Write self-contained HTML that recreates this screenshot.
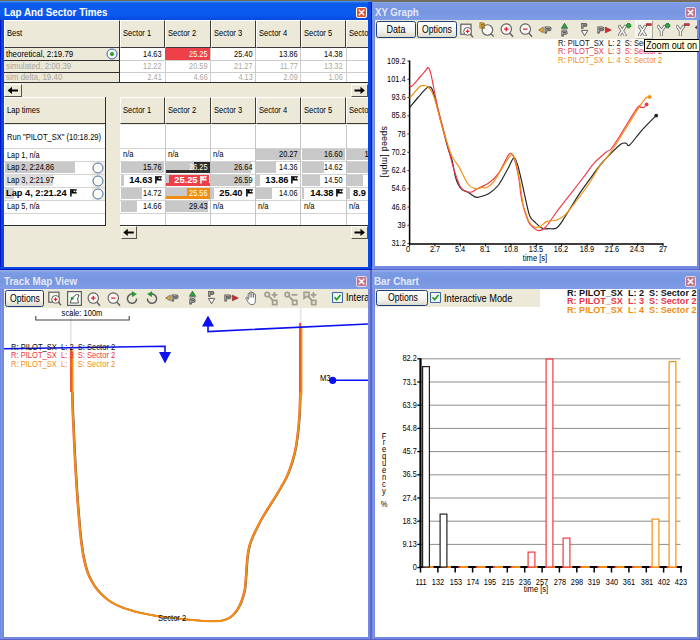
<!DOCTYPE html>
<html><head><meta charset="utf-8"><title>Lap And Sector Times</title>
<style>
html,body{margin:0;padding:0;}
body{width:700px;height:640px;position:relative;overflow:hidden;background:#fff;font-family:"Liberation Sans",sans-serif;}
div,span.t,svg{position:absolute;}
span.t{white-space:pre;}
.hc{background:#ece9d8;box-sizing:border-box;border-left:1px solid #fff;border-top:1px solid #fff;border-right:1px solid #3c3c3c;border-bottom:1px solid #3c3c3c;}
.btn{box-sizing:border-box;border:1px solid #1d3f7a;border-radius:2.5px;background:linear-gradient(#ffffff,#f4f3ee 60%,#dddacb);}
.sb{box-sizing:border-box;background:#ece9d8;border-left:1px solid #fff;border-top:1px solid #fff;border-right:1px solid #55524a;border-bottom:1px solid #55524a;}
</style></head><body>

<div style="left:0px;top:0px;width:700px;height:2px;background:#726c5d;"></div>
<div style="left:0px;top:1.2px;width:372px;height:269px;background:#0a46e4;"></div>
<div style="left:0px;top:1.2px;width:1.2px;height:269px;background:#0018c4;"></div>
<div style="left:370.6px;top:1.2px;width:1.4px;height:269px;background:#0016b8;"></div>
<div style="left:0px;top:1.2px;width:372px;height:19px;background:linear-gradient(#3a8ef8 0,#0a58e6 14%,#0a5cee 40%,#0a5af0 72%,#0848da 100%);"></div>
<div style="left:4px;top:20px;width:364px;height:246.6px;background:#ece9d8;"></div>
<div style="left:372px;top:1.2px;width:328px;height:268.8px;background:#7189de;"></div>
<div style="left:372px;top:269.0px;width:328px;height:1px;background:#5c62c8;"></div>
<div style="left:699px;top:1.2px;width:1px;height:268.8px;background:#5c62c8;"></div>
<div style="left:373.2px;top:20.2px;width:1.3px;height:248.8px;background:#7f97e4;"></div>
<div style="left:372px;top:1.2px;width:328px;height:19px;background:linear-gradient(#98b0ec 0,#7b9ae4 15%,#7896e0 60%,#809ce6 100%);"></div>
<div style="left:372px;top:0px;width:328px;height:2px;background:#726c5d;"></div>
<div style="left:0px;top:270px;width:372px;height:370px;background:#7189de;"></div>
<div style="left:0px;top:639px;width:372px;height:1px;background:#5c62c8;"></div>
<div style="left:371px;top:270px;width:1px;height:370px;background:#5c62c8;"></div>
<div style="left:1.2px;top:289px;width:1.3px;height:350px;background:#7f97e4;"></div>
<div style="left:0px;top:270px;width:372px;height:19px;background:linear-gradient(#98b0ec 0,#7b9ae4 15%,#7896e0 60%,#809ce6 100%);"></div>
<div style="left:372px;top:270px;width:328px;height:370px;background:#7189de;"></div>
<div style="left:372px;top:639px;width:328px;height:1px;background:#5c62c8;"></div>
<div style="left:699px;top:270px;width:1px;height:370px;background:#5c62c8;"></div>
<div style="left:373.2px;top:289px;width:1.3px;height:350px;background:#7f97e4;"></div>
<div style="left:372px;top:270px;width:328px;height:19px;background:linear-gradient(#98b0ec 0,#7b9ae4 15%,#7896e0 60%,#809ce6 100%);"></div>
<div style="left:370.4px;top:270px;width:1.4px;height:370px;background:#5e66cc;"></div>
<div style="left:368px;top:1.2px;width:3.8px;height:269px;background:#0a46e4;"></div>
<div style="left:370.6px;top:1.2px;width:1.3px;height:269px;background:#0016b8;"></div>
<div style="left:0px;top:266.6px;width:372px;height:3.4px;background:#0a46e4;"></div>
<div style="left:0px;top:268.8px;width:372px;height:1.2px;background:#0016b8;"></div>
<div style="left:0px;top:1.2px;width:372px;height:1px;background:#3d8df7;"></div>
<div style="left:375px;top:20px;width:322px;height:246.3px;background:#fff;"></div>
<div style="left:4px;top:288.6px;width:364px;height:348.4px;background:#fff;"></div>
<div style="left:375px;top:288.6px;width:322px;height:348.4px;background:#fff;"></div>
<span class="t" style="top:7.98px;font-size:10.3px;line-height:10.3px;color:#fff;font-weight:bold;left:3.9px;transform-origin:0 50%;transform:scaleX(0.957);">Lap And Sector Times</span>
<span class="t" style="top:7.98px;font-size:10.3px;line-height:10.3px;color:#e4e9f9;font-weight:bold;left:374.5px;transform-origin:0 50%;transform:scaleX(0.935);">XY Graph</span>
<span class="t" style="top:276.88px;font-size:10.3px;line-height:10.3px;color:#e4e9f9;font-weight:bold;left:4px;transform-origin:0 50%;transform:scaleX(0.957);">Track Map View</span>
<span class="t" style="top:276.88px;font-size:10.3px;line-height:10.3px;color:#e4e9f9;font-weight:bold;left:374.4px;transform-origin:0 50%;transform:scaleX(0.957);">Bar Chart</span>
<svg style="left:356px;top:7px" width="11" height="11" viewBox="0 0 11 11"><rect x="0.5" y="0.5" width="10" height="10" rx="1.5" fill="#e2502f" stroke="#fff" stroke-width="1"/><path d="M3.2 3.2L7.8 7.8M7.8 3.2L3.2 7.8" stroke="#fff" stroke-width="1.6" stroke-linecap="round"/></svg>
<svg style="left:684.5px;top:6.5px" width="11" height="11" viewBox="0 0 11 11"><rect x="0.5" y="0.5" width="10" height="10" rx="1.5" fill="#c0748c" stroke="#e6d7e6" stroke-width="1"/><path d="M3.2 3.2L7.8 7.8M7.8 3.2L3.2 7.8" stroke="#fff" stroke-width="1.6" stroke-linecap="round"/></svg>
<svg style="left:356px;top:275.5px" width="11" height="11" viewBox="0 0 11 11"><rect x="0.5" y="0.5" width="10" height="10" rx="1.5" fill="#c0748c" stroke="#e6d7e6" stroke-width="1"/><path d="M3.2 3.2L7.8 7.8M7.8 3.2L3.2 7.8" stroke="#fff" stroke-width="1.6" stroke-linecap="round"/></svg>
<svg style="left:684.5px;top:275.5px" width="11" height="11" viewBox="0 0 11 11"><rect x="0.5" y="0.5" width="10" height="10" rx="1.5" fill="#c0748c" stroke="#e6d7e6" stroke-width="1"/><path d="M3.2 3.2L7.8 7.8M7.8 3.2L3.2 7.8" stroke="#fff" stroke-width="1.6" stroke-linecap="round"/></svg>
<div style="left:4px;top:20px;width:364px;height:246px;overflow:hidden">
<div style="left:-4px;top:-20px;width:700px;height:640px">
<div class="hc" style="left:4px;top:20px;width:116px;height:27.8px"></div>
<span class="t" style="top:28.72px;font-size:8.6px;line-height:8.6px;color:#000;left:7px;transform-origin:0 50%;transform:scaleX(0.88);">Best</span>
<div class="hc" style="left:120.0px;top:20px;width:45.25px;height:27.8px"></div>
<span class="t" style="top:28.72px;font-size:8.6px;line-height:8.6px;color:#000;left:123.0px;transform-origin:0 50%;transform:scaleX(0.88);">Sector 1</span>
<div class="hc" style="left:165.25px;top:20px;width:45.25px;height:27.8px"></div>
<span class="t" style="top:28.72px;font-size:8.6px;line-height:8.6px;color:#000;left:168.25px;transform-origin:0 50%;transform:scaleX(0.88);">Sector 2</span>
<div class="hc" style="left:210.5px;top:20px;width:45.25px;height:27.8px"></div>
<span class="t" style="top:28.72px;font-size:8.6px;line-height:8.6px;color:#000;left:213.5px;transform-origin:0 50%;transform:scaleX(0.88);">Sector 3</span>
<div class="hc" style="left:255.75px;top:20px;width:45.25px;height:27.8px"></div>
<span class="t" style="top:28.72px;font-size:8.6px;line-height:8.6px;color:#000;left:258.75px;transform-origin:0 50%;transform:scaleX(0.88);">Sector 4</span>
<div class="hc" style="left:301.0px;top:20px;width:45.25px;height:27.8px"></div>
<span class="t" style="top:28.72px;font-size:8.6px;line-height:8.6px;color:#000;left:304.0px;transform-origin:0 50%;transform:scaleX(0.88);">Sector 5</span>
<div class="hc" style="left:346.25px;top:20px;width:45.25px;height:27.8px"></div>
<span class="t" style="top:28.72px;font-size:8.6px;line-height:8.6px;color:#000;left:349.25px;transform-origin:0 50%;transform:scaleX(0.88);">Sector 6</span>
<div style="left:4px;top:47.8px;width:115px;height:35px;background:#ece9d8;"></div>
<div style="left:4px;top:60px;width:115px;height:1px;background:#2e2e2e;"></div>
<div style="left:4px;top:71.5px;width:115px;height:1px;background:#2e2e2e;"></div>
<div style="left:119px;top:47px;width:1px;height:36px;background:#2e2e2e;"></div>
<div style="left:4px;top:82.2px;width:364px;height:1px;background:#2e2e2e;"></div>
<span class="t" style="top:49.72px;font-size:8.6px;line-height:8.6px;color:#000;left:6px;transform-origin:0 50%;transform:scaleX(0.92);">theoretical, 2:19.79</span>
<span class="t" style="top:62.32px;font-size:8.6px;line-height:8.6px;color:#aaa79c;left:6px;transform-origin:0 50%;transform:scaleX(0.93);">simulated, 2:00.39</span>
<span class="t" style="top:73.32px;font-size:8.6px;line-height:8.6px;color:#aaa79c;left:6px;transform-origin:0 50%;transform:scaleX(0.93);">sim delta, 19.40</span>
<svg style="left:106px;top:47.6px" width="12" height="12" viewBox="0 0 12 12"><circle cx="6" cy="6" r="5" fill="#f6f6f2" stroke="#3f64ad" stroke-width="1"/><circle cx="6" cy="6" r="2" fill="#21a121"/></svg>
<div style="left:120px;top:47.8px;width:248px;height:34.4px;background:#fff;"></div>
<div style="left:120px;top:60px;width:248px;height:1px;background:#cdcdcd;"></div>
<div style="left:120px;top:71.5px;width:248px;height:1px;background:#cdcdcd;"></div>
<div style="left:164.55px;top:47.8px;width:1px;height:34.4px;background:#cdcdcd;"></div>
<div style="left:209.8px;top:47.8px;width:1px;height:34.4px;background:#cdcdcd;"></div>
<div style="left:255.05px;top:47.8px;width:1px;height:34.4px;background:#cdcdcd;"></div>
<div style="left:300.3px;top:47.8px;width:1px;height:34.4px;background:#cdcdcd;"></div>
<div style="left:345.55px;top:47.8px;width:1px;height:34.4px;background:#cdcdcd;"></div>
<div style="left:165px;top:47.8px;width:44.5px;height:12px;background:#ee4048;"></div>
<span class="t" style="top:49.72px;font-size:8.6px;line-height:8.6px;color:#000;right:538.00px;transform-origin:100% 50%;transform:scaleX(0.855);">14.63</span>
<span class="t" style="top:62.32px;font-size:8.6px;line-height:8.6px;color:#aaa79c;right:538.00px;transform-origin:100% 50%;transform:scaleX(0.855);">12.22</span>
<span class="t" style="top:73.32px;font-size:8.6px;line-height:8.6px;color:#aaa79c;right:538.00px;transform-origin:100% 50%;transform:scaleX(0.855);">2.41</span>
<span class="t" style="top:49.72px;font-size:8.6px;line-height:8.6px;color:#fff;right:492.75px;transform-origin:100% 50%;transform:scaleX(0.855);">25.25</span>
<span class="t" style="top:62.32px;font-size:8.6px;line-height:8.6px;color:#aaa79c;right:492.75px;transform-origin:100% 50%;transform:scaleX(0.855);">20.59</span>
<span class="t" style="top:73.32px;font-size:8.6px;line-height:8.6px;color:#aaa79c;right:492.75px;transform-origin:100% 50%;transform:scaleX(0.855);">4.66</span>
<span class="t" style="top:49.72px;font-size:8.6px;line-height:8.6px;color:#000;right:447.50px;transform-origin:100% 50%;transform:scaleX(0.855);">25.40</span>
<span class="t" style="top:62.32px;font-size:8.6px;line-height:8.6px;color:#aaa79c;right:447.50px;transform-origin:100% 50%;transform:scaleX(0.855);">21.27</span>
<span class="t" style="top:73.32px;font-size:8.6px;line-height:8.6px;color:#aaa79c;right:447.50px;transform-origin:100% 50%;transform:scaleX(0.855);">4.13</span>
<span class="t" style="top:49.72px;font-size:8.6px;line-height:8.6px;color:#000;right:402.25px;transform-origin:100% 50%;transform:scaleX(0.855);">13.86</span>
<span class="t" style="top:62.32px;font-size:8.6px;line-height:8.6px;color:#aaa79c;right:402.25px;transform-origin:100% 50%;transform:scaleX(0.855);">11.77</span>
<span class="t" style="top:73.32px;font-size:8.6px;line-height:8.6px;color:#aaa79c;right:402.25px;transform-origin:100% 50%;transform:scaleX(0.855);">2.09</span>
<span class="t" style="top:49.72px;font-size:8.6px;line-height:8.6px;color:#000;right:357.00px;transform-origin:100% 50%;transform:scaleX(0.855);">14.38</span>
<span class="t" style="top:62.32px;font-size:8.6px;line-height:8.6px;color:#aaa79c;right:357.00px;transform-origin:100% 50%;transform:scaleX(0.855);">13.32</span>
<span class="t" style="top:73.32px;font-size:8.6px;line-height:8.6px;color:#aaa79c;right:357.00px;transform-origin:100% 50%;transform:scaleX(0.855);">1.06</span>
<div class="sb" style="left:4px;top:84px;width:18px;height:12.5px"></div>
<svg style="left:0;top:0" width="700" height="640"><path d="M18.0 89.45H12.0V86.85000000000001L7.6 90.45L12.0 94.05V91.45H18.0Z" fill="#000"/></svg>
<div class="sb" style="left:351px;top:84px;width:17px;height:12.5px"></div>
<svg style="left:0;top:0" width="700" height="640"><path d="M354.5 89.45H360.5V86.85000000000001L364.9 90.45L360.5 94.05V91.45H354.5Z" fill="#000"/></svg>
<div class="hc" style="left:4px;top:97.3px;width:102.3px;height:27.2px"></div>
<span class="t" style="top:105.72px;font-size:8.6px;line-height:8.6px;color:#000;left:7px;transform-origin:0 50%;transform:scaleX(0.88);">Lap times</span>
<div class="hc" style="left:120.0px;top:97.3px;width:45.25px;height:27.2px"></div>
<span class="t" style="top:105.72px;font-size:8.6px;line-height:8.6px;color:#000;left:123.0px;transform-origin:0 50%;transform:scaleX(0.88);">Sector 1</span>
<div class="hc" style="left:165.25px;top:97.3px;width:45.25px;height:27.2px"></div>
<span class="t" style="top:105.72px;font-size:8.6px;line-height:8.6px;color:#000;left:168.25px;transform-origin:0 50%;transform:scaleX(0.88);">Sector 2</span>
<div class="hc" style="left:210.5px;top:97.3px;width:45.25px;height:27.2px"></div>
<span class="t" style="top:105.72px;font-size:8.6px;line-height:8.6px;color:#000;left:213.5px;transform-origin:0 50%;transform:scaleX(0.88);">Sector 3</span>
<div class="hc" style="left:255.75px;top:97.3px;width:45.25px;height:27.2px"></div>
<span class="t" style="top:105.72px;font-size:8.6px;line-height:8.6px;color:#000;left:258.75px;transform-origin:0 50%;transform:scaleX(0.88);">Sector 4</span>
<div class="hc" style="left:301.0px;top:97.3px;width:45.25px;height:27.2px"></div>
<span class="t" style="top:105.72px;font-size:8.6px;line-height:8.6px;color:#000;left:304.0px;transform-origin:0 50%;transform:scaleX(0.88);">Sector 5</span>
<div class="hc" style="left:346.25px;top:97.3px;width:45.25px;height:27.2px"></div>
<span class="t" style="top:105.72px;font-size:8.6px;line-height:8.6px;color:#000;left:349.25px;transform-origin:0 50%;transform:scaleX(0.88);">Sector 6</span>
<div style="left:4px;top:124.5px;width:101px;height:101px;background:#fff;"></div>
<div style="left:105px;top:97.3px;width:1.3px;height:129px;background:#2e2e2e;"></div>
<div style="left:4px;top:147.7px;width:101px;height:1px;background:#d4d4d4;"></div>
<div style="left:4px;top:160.7px;width:101px;height:1px;background:#d4d4d4;"></div>
<div style="left:4px;top:173.7px;width:101px;height:1px;background:#d4d4d4;"></div>
<div style="left:4px;top:186.7px;width:101px;height:1px;background:#d4d4d4;"></div>
<div style="left:4px;top:199.7px;width:101px;height:1px;background:#d4d4d4;"></div>
<div style="left:4px;top:212.7px;width:101px;height:1px;background:#d4d4d4;"></div>
<div style="left:4px;top:225px;width:102.3px;height:1px;background:#2e2e2e;"></div>
<div style="left:4.5px;top:162px;width:70.5px;height:11.3px;background:#c9c9c9;"></div>
<div style="left:4.5px;top:175px;width:48px;height:11.3px;background:#dcdcdc;"></div>
<div style="left:4.5px;top:188px;width:9.5px;height:11.3px;background:#d2d2d2;"></div>
<div style="left:92px;top:162px;width:13px;height:11.6px;background:#f1efe3;"></div>
<div style="left:92px;top:175px;width:13px;height:11.6px;background:#f1efe3;"></div>
<div style="left:92px;top:188px;width:13px;height:11.6px;background:#f1efe3;"></div>
<span class="t" style="top:132.72px;font-size:8.6px;line-height:8.6px;color:#000;left:6.5px;transform-origin:0 50%;transform:scaleX(0.88);">Run "PILOT_SX" (10:18.29)</span>
<span class="t" style="top:150.92px;font-size:8.6px;line-height:8.6px;color:#000;left:6.5px;transform-origin:0 50%;transform:scaleX(0.855);">Lap 1, n/a</span>
<span class="t" style="top:163.02px;font-size:8.6px;line-height:8.6px;color:#000;left:6.5px;transform-origin:0 50%;transform:scaleX(0.855);">Lap 2, 2:24.86</span>
<span class="t" style="top:176.02px;font-size:8.6px;line-height:8.6px;color:#000;left:6.5px;transform-origin:0 50%;transform:scaleX(0.855);">Lap 3, 2:21.97</span>
<span class="t" style="top:189.02px;font-size:8.6px;line-height:8.6px;color:#000;font-weight:bold;left:6px;transform-origin:0 50%;transform:scaleX(1.075);">Lap 4, 2:21.24</span>
<span class="t" style="top:202.02px;font-size:8.6px;line-height:8.6px;color:#000;left:6.5px;transform-origin:0 50%;transform:scaleX(0.855);">Lap 5, n/a</span>
<svg style="left:70px;top:188.8px" width="8" height="8" viewBox="0 0 8 8"><path d="M0.9 0V7.4" stroke="#000" stroke-width="1.5"/><path d="M1.4 0.3H6.8V1.6H5.6V3.2H6.8V4.6H1.4Z" fill="#000"/><rect x="3.6" y="1.5" width="1.3" height="1.5" fill="#fff"/></svg>
<svg style="left:92px;top:161.6px" width="12" height="12" viewBox="0 0 12 12"><circle cx="6" cy="6" r="5" fill="#fbfbf8" stroke="#4a6eb4" stroke-width="1"/></svg>
<svg style="left:92px;top:174.6px" width="12" height="12" viewBox="0 0 12 12"><circle cx="6" cy="6" r="5" fill="#fbfbf8" stroke="#4a6eb4" stroke-width="1"/></svg>
<svg style="left:92px;top:187.6px" width="12" height="12" viewBox="0 0 12 12"><circle cx="6" cy="6" r="5" fill="#fbfbf8" stroke="#4a6eb4" stroke-width="1"/></svg>
<div style="left:120px;top:124.5px;width:248px;height:100.5px;background:#fff;"></div>
<div style="left:120px;top:225px;width:248px;height:1px;background:#2e2e2e;"></div>
<div style="left:256.25px;top:149.0px;width:43.5px;height:11.3px;background:#c8c8c8;"></div>
<div style="left:301.5px;top:149.0px;width:43.5px;height:11.3px;background:#c8c8c8;"></div>
<div style="left:346.75px;top:149.0px;width:43.5px;height:11.3px;background:#c8c8c8;"></div>
<div style="left:120.5px;top:162.0px;width:43.5px;height:11.3px;background:#c8c8c8;"></div>
<div style="left:165.75px;top:162.0px;width:28.25px;height:11.3px;background:#c8c8c8;"></div>
<div style="left:194px;top:162px;width:15.5px;height:11.3px;background:#2c2c2c;"></div>
<div style="left:165.5px;top:170.4px;width:44px;height:3px;background:#2c2c2c;"></div>
<div style="left:211.0px;top:162.0px;width:40.0px;height:11.3px;background:#c8c8c8;"></div>
<div style="left:256.25px;top:162.0px;width:19.75px;height:11.3px;background:#c8c8c8;"></div>
<div style="left:301.5px;top:162.0px;width:22.5px;height:11.3px;background:#c8c8c8;"></div>
<div style="left:346.75px;top:162.0px;width:43.5px;height:11.3px;background:#c8c8c8;"></div>
<div style="left:120.5px;top:175.0px;width:3.0px;height:11.3px;background:#c8c8c8;"></div>
<div style="left:165.5px;top:175px;width:4px;height:8px;background:#c8c8c8;"></div>
<div style="left:169.3px;top:174.6px;width:40.2px;height:11.7px;background:#ee4048;"></div>
<div style="left:165.5px;top:182.8px;width:44px;height:3.5px;background:#ee4048;"></div>
<div style="left:211.0px;top:175.0px;width:39.0px;height:11.3px;background:#c8c8c8;"></div>
<div style="left:256.25px;top:175.0px;width:3.25px;height:11.3px;background:#c8c8c8;"></div>
<div style="left:301.5px;top:175.0px;width:18.5px;height:11.3px;background:#c8c8c8;"></div>
<div style="left:346.75px;top:175.0px;width:16.25px;height:11.3px;background:#c8c8c8;"></div>
<div style="left:120.5px;top:188.0px;width:21.0px;height:11.3px;background:#c8c8c8;"></div>
<div style="left:165.75px;top:188.0px;width:20.75px;height:11.3px;background:#c8c8c8;"></div>
<div style="left:186.5px;top:188px;width:23px;height:11.3px;background:#f28c10;"></div>
<div style="left:165.5px;top:195.9px;width:44px;height:3px;background:#f28c10;"></div>
<div style="left:211.0px;top:188.0px;width:3.0px;height:11.3px;background:#c8c8c8;"></div>
<div style="left:256.25px;top:188.0px;width:15.75px;height:11.3px;background:#c8c8c8;"></div>
<div style="left:301.5px;top:188.0px;width:2.5px;height:11.3px;background:#c8c8c8;"></div>
<div style="left:346.75px;top:188.0px;width:2.75px;height:11.3px;background:#c8c8c8;"></div>
<div style="left:120.5px;top:201.0px;width:16.5px;height:11.3px;background:#c8c8c8;"></div>
<div style="left:165.75px;top:201.0px;width:42.25px;height:11.3px;background:#c8c8c8;"></div>
<div style="left:120px;top:147.7px;width:248px;height:1px;background:#d4d4d4;"></div>
<div style="left:120px;top:160.7px;width:248px;height:1px;background:#d4d4d4;"></div>
<div style="left:120px;top:173.7px;width:248px;height:1px;background:#d4d4d4;"></div>
<div style="left:120px;top:186.7px;width:248px;height:1px;background:#d4d4d4;"></div>
<div style="left:120px;top:199.7px;width:248px;height:1px;background:#d4d4d4;"></div>
<div style="left:120px;top:212.7px;width:248px;height:1px;background:#d4d4d4;"></div>
<div style="left:164.55px;top:124.5px;width:1px;height:100.5px;background:#c4c4c4;"></div>
<div style="left:209.8px;top:124.5px;width:1px;height:100.5px;background:#c4c4c4;"></div>
<div style="left:255.05px;top:124.5px;width:1px;height:100.5px;background:#c4c4c4;"></div>
<div style="left:300.3px;top:124.5px;width:1px;height:100.5px;background:#c4c4c4;"></div>
<div style="left:345.55px;top:124.5px;width:1px;height:100.5px;background:#c4c4c4;"></div>
<span class="t" style="top:150.02px;font-size:8.6px;line-height:8.6px;color:#000;left:122.5px;transform-origin:0 50%;transform:scaleX(0.88);">n/a</span>
<span class="t" style="top:150.02px;font-size:8.6px;line-height:8.6px;color:#000;left:167.75px;transform-origin:0 50%;transform:scaleX(0.88);">n/a</span>
<span class="t" style="top:150.02px;font-size:8.6px;line-height:8.6px;color:#000;left:213.0px;transform-origin:0 50%;transform:scaleX(0.88);">n/a</span>
<span class="t" style="top:150.02px;font-size:8.6px;line-height:8.6px;color:#000;right:402.25px;transform-origin:100% 50%;transform:scaleX(0.855);">20.27</span>
<span class="t" style="top:150.02px;font-size:8.6px;line-height:8.6px;color:#000;right:357.00px;transform-origin:100% 50%;transform:scaleX(0.855);">16.60</span>
<span class="t" style="top:150.02px;font-size:8.6px;line-height:8.6px;color:#000;right:331.50px;transform-origin:100% 50%;transform:scaleX(0.88);">1</span>
<span class="t" style="top:163.02px;font-size:8.6px;line-height:8.6px;color:#000;right:538.00px;transform-origin:100% 50%;transform:scaleX(0.855);">15.76</span>
<span class="t" style="top:163.02px;font-size:8.6px;line-height:8.6px;color:#fff;right:492.75px;transform-origin:100% 50%;transform:scaleX(0.855);">26.25</span>
<span class="t" style="top:163.02px;font-size:8.6px;line-height:8.6px;color:#000;right:447.50px;transform-origin:100% 50%;transform:scaleX(0.855);">26.64</span>
<span class="t" style="top:163.02px;font-size:8.6px;line-height:8.6px;color:#000;right:402.25px;transform-origin:100% 50%;transform:scaleX(0.855);">14.36</span>
<span class="t" style="top:163.02px;font-size:8.6px;line-height:8.6px;color:#000;right:357.00px;transform-origin:100% 50%;transform:scaleX(0.855);">14.62</span>
<span class="t" style="top:176.02px;font-size:8.6px;line-height:8.6px;color:#000;font-weight:bold;right:547.60px;transform-origin:100% 50%;transform:scaleX(1.08);">14.63</span>
<svg style="left:155.1px;top:176.2px" width="8" height="8" viewBox="0 0 8 8"><path d="M0.9 0V7.4" stroke="#000" stroke-width="1.5"/><path d="M1.4 0.3H6.8V1.6H5.6V3.2H6.8V4.6H1.4Z" fill="#000"/><rect x="3.6" y="1.5" width="1.3" height="1.5" fill="#fff"/></svg>
<span class="t" style="top:176.02px;font-size:8.6px;line-height:8.6px;color:#fff;font-weight:bold;right:502.35px;transform-origin:100% 50%;transform:scaleX(1.08);">25.25</span>
<svg style="left:200.35px;top:176.2px" width="8" height="8" viewBox="0 0 8 8"><path d="M0.9 0V7.4" stroke="#fff" stroke-width="1.5"/><path d="M1.4 0.3H6.8V1.6H5.6V3.2H6.8V4.6H1.4Z" fill="#fff"/><rect x="3.6" y="1.5" width="1.3" height="1.5" fill="#ee4048"/></svg>
<span class="t" style="top:176.02px;font-size:8.6px;line-height:8.6px;color:#000;right:447.50px;transform-origin:100% 50%;transform:scaleX(0.855);">26.59</span>
<span class="t" style="top:176.02px;font-size:8.6px;line-height:8.6px;color:#000;font-weight:bold;right:411.85px;transform-origin:100% 50%;transform:scaleX(1.08);">13.86</span>
<svg style="left:290.85px;top:176.2px" width="8" height="8" viewBox="0 0 8 8"><path d="M0.9 0V7.4" stroke="#000" stroke-width="1.5"/><path d="M1.4 0.3H6.8V1.6H5.6V3.2H6.8V4.6H1.4Z" fill="#000"/><rect x="3.6" y="1.5" width="1.3" height="1.5" fill="#fff"/></svg>
<span class="t" style="top:176.02px;font-size:8.6px;line-height:8.6px;color:#000;right:357.00px;transform-origin:100% 50%;transform:scaleX(0.855);">14.50</span>
<span class="t" style="top:189.02px;font-size:8.6px;line-height:8.6px;color:#000;right:538.00px;transform-origin:100% 50%;transform:scaleX(0.855);">14.72</span>
<span class="t" style="top:189.02px;font-size:8.6px;line-height:8.6px;color:#fff;right:492.75px;transform-origin:100% 50%;transform:scaleX(0.855);">25.56</span>
<span class="t" style="top:189.02px;font-size:8.6px;line-height:8.6px;color:#000;font-weight:bold;right:457.10px;transform-origin:100% 50%;transform:scaleX(1.08);">25.40</span>
<svg style="left:245.6px;top:189.2px" width="8" height="8" viewBox="0 0 8 8"><path d="M0.9 0V7.4" stroke="#000" stroke-width="1.5"/><path d="M1.4 0.3H6.8V1.6H5.6V3.2H6.8V4.6H1.4Z" fill="#000"/><rect x="3.6" y="1.5" width="1.3" height="1.5" fill="#fff"/></svg>
<span class="t" style="top:189.02px;font-size:8.6px;line-height:8.6px;color:#000;right:402.25px;transform-origin:100% 50%;transform:scaleX(0.855);">14.06</span>
<span class="t" style="top:189.02px;font-size:8.6px;line-height:8.6px;color:#000;font-weight:bold;right:366.60px;transform-origin:100% 50%;transform:scaleX(1.08);">14.38</span>
<svg style="left:336.1px;top:189.2px" width="8" height="8" viewBox="0 0 8 8"><path d="M0.9 0V7.4" stroke="#000" stroke-width="1.5"/><path d="M1.4 0.3H6.8V1.6H5.6V3.2H6.8V4.6H1.4Z" fill="#000"/><rect x="3.6" y="1.5" width="1.3" height="1.5" fill="#fff"/></svg>
<span class="t" style="top:189.02px;font-size:8.6px;line-height:8.6px;color:#000;font-weight:bold;left:353.3px;transform-origin:0 50%;transform:scaleX(1.08);">8.9</span>
<span class="t" style="top:202.02px;font-size:8.6px;line-height:8.6px;color:#000;right:538.00px;transform-origin:100% 50%;transform:scaleX(0.855);">14.66</span>
<span class="t" style="top:202.02px;font-size:8.6px;line-height:8.6px;color:#000;right:492.75px;transform-origin:100% 50%;transform:scaleX(0.855);">29.43</span>
<span class="t" style="top:202.02px;font-size:8.6px;line-height:8.6px;color:#000;left:213.0px;transform-origin:0 50%;transform:scaleX(0.88);">n/a</span>
<span class="t" style="top:202.02px;font-size:8.6px;line-height:8.6px;color:#000;left:258.25px;transform-origin:0 50%;transform:scaleX(0.88);">n/a</span>
<span class="t" style="top:202.02px;font-size:8.6px;line-height:8.6px;color:#000;left:303.5px;transform-origin:0 50%;transform:scaleX(0.88);">n/a</span>
<span class="t" style="top:202.02px;font-size:8.6px;line-height:8.6px;color:#000;left:348.75px;transform-origin:0 50%;transform:scaleX(0.88);">n/a</span>
<div class="sb" style="left:120.5px;top:226px;width:16.5px;height:12.5px"></div>
<svg style="left:0;top:0" width="700" height="640"><path d="M133.75 231.45H127.75V228.85L123.35 232.45L127.75 236.04999999999998V233.45H133.75Z" fill="#000"/></svg>
<div class="sb" style="left:351px;top:226px;width:17px;height:12.5px"></div>
<svg style="left:0;top:0" width="700" height="640"><path d="M354.5 231.45H360.5V228.85L364.9 232.45L360.5 236.04999999999998V233.45H354.5Z" fill="#000"/></svg>
</div></div>
<div style="left:375px;top:20px;width:322px;height:19px;background:#ece9d8;"></div>
<div class="btn" style="left:376px;top:21px;width:39.5px;height:17px"></div>
<span class="t" style="top:24.60px;font-size:10.4px;line-height:10.4px;color:#000;left:295.95px;width:200px;text-align:center;transform-origin:50% 50%;transform:scaleX(0.865);">Data</span>
<div class="btn" style="left:417px;top:21px;width:39.5px;height:17px"></div>
<span class="t" style="top:24.60px;font-size:10.4px;line-height:10.4px;color:#000;left:336.95px;width:200px;text-align:center;transform-origin:50% 50%;transform:scaleX(0.835);">Options</span>
<svg style="left:460px;top:22.5px" width="14" height="15" viewBox="0 0 14 15"><rect x="0.8" y="1.2" width="10.2" height="10" fill="#f4f3ec" stroke="#5e5e5e" stroke-width="1.2"/><circle cx="7.6" cy="8.4" r="3.9" fill="#fff" stroke="#5e5e5e" stroke-width="1"/><path d="M10.4 11.2L13 14.2" stroke="#5e5e5e" stroke-width="1.3"/><path d="M5.8 8.4H9.4M7.6 6.6V10.2" stroke="#e02020" stroke-width="1.2"/></svg>
<svg style="left:478.5px;top:21.5px" width="15" height="15" viewBox="0 0 15 15"><circle cx="8.4" cy="8" r="5.3" fill="#f8f8f4" stroke="#5e5e5e" stroke-width="1.1"/><path d="M12.2 11.8L14.6 14.6" stroke="#5e5e5e" stroke-width="1.3"/><path d="M1.6 6.4V1.4H3.8Q5 1.4 5 2.7Q5 3.8 3.8 3.8H1.6M3.6 3.8L5.2 6.4" fill="none" stroke="#6a5420" stroke-width="2"/><path d="M1.6 6.4V1.4H3.8Q5 1.4 5 2.7Q5 3.8 3.8 3.8H1.6M3.6 3.8L5.2 6.4" fill="none" stroke="#f0b030" stroke-width="0.9"/></svg>
<svg style="left:499.5px;top:22.5px" width="14" height="15" viewBox="0 0 14 15"><circle cx="6.3" cy="6.1" r="5.2" fill="#f8f8f4" stroke="#5e5e5e" stroke-width="1.1"/><path d="M10 10.2L13 13.8" stroke="#5e5e5e" stroke-width="1.4"/><path d="M4.1 6.1H8.5" stroke="#e82030" stroke-width="1.3"/><path d="M6.3 3.9V8.3" stroke="#e82030" stroke-width="1.3"/></svg>
<svg style="left:519px;top:22.5px" width="14" height="15" viewBox="0 0 14 15"><circle cx="6.3" cy="6.1" r="5.2" fill="#f8f8f4" stroke="#5e5e5e" stroke-width="1.1"/><path d="M10 10.2L13 13.8" stroke="#5e5e5e" stroke-width="1.4"/><path d="M4.1 6.1H8.5" stroke="#e82030" stroke-width="1.3"/></svg>
<svg style="left:538px;top:23.5px" width="15" height="12" viewBox="0 0 15 12"><path d="M0.7 6L5.2 3.2V8.8Z" fill="#f0a830" stroke="#6a5a3a" stroke-width="0.7"/><path d="M7.75 8.45V3.55H11.18Q12.45 3.55 12.45 4.82V4.82Q12.45 6.10 11.18 6.10H7.75" fill="none" stroke="#4a4a4a" stroke-width="2.3" stroke-linecap="square" stroke-linejoin="miter"/><path d="M7.75 8.45V3.55H11.18Q12.45 3.55 12.45 4.82V4.82Q12.45 6.10 11.18 6.10H7.75" fill="none" stroke="#fbfaf4" stroke-width="0.55" stroke-linecap="butt" opacity="0.85"/></svg>
<svg style="left:560px;top:21.5px" width="9" height="16" viewBox="0 0 9 16"><path d="M4.5 1.2L7.6 6.3H1.4Z" fill="#28a838" stroke="#3c5c40" stroke-width="0.8"/><path d="M1.6 7.9H7.4" stroke="#8a8a8a" stroke-width="1"/><path d="M2.55 13.25V9.75H5.54Q6.45 9.75 6.45 10.66V10.66Q6.45 11.57 5.54 11.57H2.55" fill="none" stroke="#4a4a4a" stroke-width="2.3" stroke-linecap="square" stroke-linejoin="miter"/><path d="M2.55 13.25V9.75H5.54Q6.45 9.75 6.45 10.66V10.66Q6.45 11.57 5.54 11.57H2.55" fill="none" stroke="#fbfaf4" stroke-width="0.55" stroke-linecap="butt" opacity="0.85"/></svg>
<svg style="left:580px;top:21.5px" width="9" height="16" viewBox="0 0 9 16"><path d="M2.35 5.65V2.15H5.34Q6.25 2.15 6.25 3.06V3.06Q6.25 3.97 5.34 3.97H2.35" fill="none" stroke="#4a4a4a" stroke-width="2.3" stroke-linecap="square" stroke-linejoin="miter"/><path d="M2.35 5.65V2.15H5.34Q6.25 2.15 6.25 3.06V3.06Q6.25 3.97 5.34 3.97H2.35" fill="none" stroke="#fbfaf4" stroke-width="0.55" stroke-linecap="butt" opacity="0.85"/><path d="M1.4 8.4H7.8L4.6 13.8Z" fill="#fff" stroke="#5e5e5e" stroke-width="1"/></svg>
<svg style="left:597px;top:23.5px" width="15" height="12" viewBox="0 0 15 12"><path d="M1.55 8.45V3.55H4.98Q6.25 3.55 6.25 4.82V4.82Q6.25 6.10 4.98 6.10H1.55" fill="none" stroke="#4a4a4a" stroke-width="2.3" stroke-linecap="square" stroke-linejoin="miter"/><path d="M1.55 8.45V3.55H4.98Q6.25 3.55 6.25 4.82V4.82Q6.25 6.10 4.98 6.10H1.55" fill="none" stroke="#fbfaf4" stroke-width="0.55" stroke-linecap="butt" opacity="0.85"/><path d="M14.2 6L8.4 3.2V8.8Z" fill="#e82028" stroke="#7a3030" stroke-width="0.7"/></svg>
<svg style="left:617.5px;top:22px" width="14" height="14" viewBox="0 0 14 14"><path d="M1.6 4.6L7 13M7 4.6L1.6 13" fill="none" stroke="#6e6e6e" stroke-width="3.1" stroke-linecap="square"/><path d="M1.6 4.6L7 13M7 4.6L1.6 13" fill="none" stroke="#fcfcf8" stroke-width="1.5" stroke-linecap="square"/><path d="M8 3.6H13.2M10.6 1V6.2" stroke="#2c5c34" stroke-width="2.6"/><path d="M8.4 3.6H12.8M10.6 1.4V5.8" stroke="#28b040" stroke-width="1.6"/></svg>
<div style="left:635px;top:20.3px;width:18.3px;height:18.4px;box-sizing:border-box;background:#f5f3ea;border:1px solid #fbfaf5;border-right-color:#a9a698;border-bottom-color:#c9c6b6"></div>
<svg style="left:637.5px;top:22px" width="14" height="14" viewBox="0 0 14 14"><path d="M1.6 4.6L7 13M7 4.6L1.6 13" fill="none" stroke="#6e6e6e" stroke-width="3.1" stroke-linecap="square"/><path d="M1.6 4.6L7 13M7 4.6L1.6 13" fill="none" stroke="#fcfcf8" stroke-width="1.5" stroke-linecap="square"/><path d="M8 2.6H13.6" stroke="#6a3a3a" stroke-width="2.4"/><path d="M8.3 2.3H13.3" stroke="#e02838" stroke-width="1.5"/></svg>
<svg style="left:656.5px;top:22px" width="14" height="14" viewBox="0 0 14 14"><path d="M1.4 4.6L4.4 9L7.4 4.6M4.4 9V13" fill="none" stroke="#6e6e6e" stroke-width="3.1" stroke-linecap="square"/><path d="M1.4 4.6L4.4 9L7.4 4.6M4.4 9V13" fill="none" stroke="#fcfcf8" stroke-width="1.5" stroke-linecap="square"/><path d="M8 3.6H13.2M10.6 1V6.2" stroke="#2c5c34" stroke-width="2.6"/><path d="M8.4 3.6H12.8M10.6 1.4V5.8" stroke="#28b040" stroke-width="1.6"/></svg>
<svg style="left:676px;top:22px" width="14" height="14" viewBox="0 0 14 14"><path d="M1.4 4.6L4.4 9L7.4 4.6M4.4 9V13" fill="none" stroke="#6e6e6e" stroke-width="3.1" stroke-linecap="square"/><path d="M1.4 4.6L4.4 9L7.4 4.6M4.4 9V13" fill="none" stroke="#fcfcf8" stroke-width="1.5" stroke-linecap="square"/><path d="M8 2.6H13.6" stroke="#6a3a3a" stroke-width="2.4"/><path d="M8.3 2.3H13.3" stroke="#e02838" stroke-width="1.5"/></svg>
<svg style="left:694px;top:24px" width="4" height="8" viewBox="0 0 4 8"><path d="M0.6 3.4L3 1.6V5.2Z" fill="#444"/></svg>
<span class="t" style="top:38.92px;font-size:8.6px;line-height:8.6px;color:#111;left:558px;transform-origin:0 50%;transform:scaleX(0.88);">R: PILOT_SX  L: 2  S: Sector 2</span>
<span class="t" style="top:47.37px;font-size:8.6px;line-height:8.6px;color:#ee3344;left:558px;transform-origin:0 50%;transform:scaleX(0.88);">R: PILOT_SX  L: 3  S: Sector 2</span>
<span class="t" style="top:55.82px;font-size:8.6px;line-height:8.6px;color:#f28c10;left:558px;transform-origin:0 50%;transform:scaleX(0.88);">R: PILOT_SX  L: 4  S: Sector 2</span>
<svg style="left:0;top:0" width="700" height="270" viewBox="0 0 700 270"><path d="M409.6 60.5V244.0H663.5" fill="none" stroke="#000" stroke-width="1.5"/><path d="M407.40000000000003 61.0H409.6" stroke="#000" stroke-width="0.8"/><path d="M409.6 243.6V246.4" stroke="#000" stroke-width="1"/><path d="M407.40000000000003 79.3H409.6" stroke="#000" stroke-width="0.8"/><path d="M434.9 243.6V246.4" stroke="#000" stroke-width="1"/><path d="M407.40000000000003 97.5H409.6" stroke="#000" stroke-width="0.8"/><path d="M460.3 243.6V246.4" stroke="#000" stroke-width="1"/><path d="M407.40000000000003 115.8H409.6" stroke="#000" stroke-width="0.8"/><path d="M485.6 243.6V246.4" stroke="#000" stroke-width="1"/><path d="M407.40000000000003 134.0H409.6" stroke="#000" stroke-width="0.8"/><path d="M511.0 243.6V246.4" stroke="#000" stroke-width="1"/><path d="M407.40000000000003 152.3H409.6" stroke="#000" stroke-width="0.8"/><path d="M536.3 243.6V246.4" stroke="#000" stroke-width="1"/><path d="M407.40000000000003 170.6H409.6" stroke="#000" stroke-width="0.8"/><path d="M561.6 243.6V246.4" stroke="#000" stroke-width="1"/><path d="M407.40000000000003 188.8H409.6" stroke="#000" stroke-width="0.8"/><path d="M587.0 243.6V246.4" stroke="#000" stroke-width="1"/><path d="M407.40000000000003 207.1H409.6" stroke="#000" stroke-width="0.8"/><path d="M612.3 243.6V246.4" stroke="#000" stroke-width="1"/><path d="M407.40000000000003 225.3H409.6" stroke="#000" stroke-width="0.8"/><path d="M637.7 243.6V246.4" stroke="#000" stroke-width="1"/><path d="M407.40000000000003 243.6H409.6" stroke="#000" stroke-width="0.8"/><path d="M663.0 243.6V246.4" stroke="#000" stroke-width="1"/><path d="M409.6 107.4C411.0 105.8 415.3 100.6 418.0 97.5C420.7 94.4 424.0 90.5 425.9 88.7C427.8 87.0 428.2 86.6 429.4 87.0C430.6 87.4 431.1 85.8 432.9 91.0C434.7 96.2 437.5 108.4 440.0 118.0C442.5 127.6 446.0 141.4 448.0 148.4C450.0 155.4 450.8 155.4 452.0 160.0C453.2 164.6 454.2 171.8 455.2 175.8C456.2 179.8 456.8 181.7 458.0 184.0C459.2 186.3 460.5 188.4 462.2 189.8C463.9 191.2 465.9 191.0 468.0 192.2C470.1 193.4 473.0 196.1 475.0 196.9C477.0 197.7 477.5 197.5 479.8 196.9C482.1 196.3 485.9 195.4 489.0 193.4C492.1 191.4 495.4 189.1 498.5 185.0C501.6 180.9 505.4 173.2 507.9 168.7C510.4 164.2 511.9 159.0 513.5 158.2C515.1 157.4 515.9 159.9 517.3 164.0C518.7 168.1 520.5 176.2 522.0 182.8C523.5 189.5 525.3 198.3 526.6 203.9C527.9 209.5 528.5 213.3 530.0 216.5C531.5 219.7 533.6 220.9 535.7 222.9C537.9 224.9 540.9 227.7 542.9 228.6C544.9 229.5 545.6 228.8 548.0 228.6C550.4 228.4 554.0 229.8 557.0 227.7C560.0 225.5 561.9 221.5 565.7 215.7C569.5 209.9 575.2 200.0 580.0 192.9C584.8 185.8 590.5 178.1 594.3 172.9C598.1 167.8 599.7 165.6 602.8 162.0C605.9 158.4 609.8 154.5 612.9 151.4C616.0 148.3 619.3 145.0 621.5 143.7C623.7 142.3 624.8 143.1 626.2 143.3C627.6 143.5 627.2 147.1 629.7 145.0C632.2 142.9 637.0 135.7 641.4 130.8C645.8 125.9 653.7 118.1 656.2 115.6" fill="none" stroke="#222" stroke-width="1.15" stroke-linejoin="round"/><circle cx="656.2" cy="115.6" r="1.9" fill="#222"/><path d="M409.6 85.0C410.0 85.2 410.1 87.6 411.8 86.3C413.5 85.0 417.6 79.7 420.0 77.0C422.4 74.3 424.6 71.6 426.0 70.0C427.4 68.4 427.4 66.8 428.2 67.6C429.0 68.3 429.4 68.0 431.0 74.5C432.6 81.0 435.2 96.3 437.5 106.5C439.8 116.7 442.5 125.8 445.0 135.5C447.5 145.2 450.4 157.1 452.5 164.5C454.6 171.9 455.9 175.9 457.5 180.0C459.1 184.1 459.9 186.9 462.0 188.9C464.1 190.9 467.8 192.2 470.4 192.2C473.0 192.2 474.3 190.3 477.4 188.7C480.5 187.1 485.5 185.4 489.0 182.8C492.5 180.2 495.4 177.9 498.5 173.4C501.6 168.9 505.9 159.2 507.9 155.9C509.9 152.6 509.7 153.3 510.7 153.5C511.7 153.7 512.4 153.3 513.7 157.0C515.0 160.7 517.0 168.4 518.4 175.8C519.8 183.2 520.4 194.1 522.0 201.5C523.6 208.9 526.2 216.3 527.8 220.3C529.4 224.3 529.6 224.0 531.4 225.7C533.2 227.4 536.2 230.4 538.6 230.6C541.0 230.8 542.6 230.2 545.7 227.0C548.8 223.8 552.7 217.1 557.0 211.4C561.3 205.7 566.6 199.1 571.4 192.9C576.2 186.7 581.9 179.3 585.7 174.3C589.5 169.3 590.9 166.6 594.3 162.9C597.7 159.2 603.1 154.8 606.3 152.0C609.5 149.2 608.2 153.2 613.3 146.0C618.4 138.8 632.2 115.0 636.7 108.6C641.2 102.2 639.1 107.6 640.3 107.4C641.5 107.2 642.8 107.9 643.8 107.4C644.8 106.9 646.1 104.9 646.6 104.4" fill="none" stroke="#f0384a" stroke-width="1.15" stroke-linejoin="round"/><circle cx="646.6" cy="104.4" r="1.9" fill="#f0384a"/><path d="M409.6 98.0C411.2 96.2 416.8 89.6 418.9 87.5C421.0 85.4 420.8 85.7 422.4 85.6C423.9 85.5 426.3 85.1 428.2 87.0C430.1 88.9 431.6 90.2 434.0 96.9C436.4 103.6 439.4 117.5 442.3 127.3C445.2 137.1 449.0 148.9 451.7 155.4C454.4 161.9 456.0 161.6 458.7 166.4C461.4 171.2 465.3 180.3 468.0 184.0C470.7 187.7 472.7 188.1 475.0 188.7C477.3 189.3 480.0 187.7 482.0 187.5C484.0 187.3 484.8 188.5 486.8 187.5C488.8 186.5 491.1 185.1 493.8 181.6C496.5 178.1 500.3 170.9 503.2 166.4C506.1 161.9 509.4 155.9 511.4 154.7C513.4 153.5 513.6 155.1 515.0 159.4C516.4 163.7 518.3 173.1 519.6 180.5C520.9 187.9 521.9 198.4 523.0 203.9C524.1 209.4 525.0 210.6 526.0 213.5C527.0 216.4 527.6 219.2 529.0 221.5C530.4 223.8 532.5 226.2 534.3 227.0C536.1 227.8 537.9 227.5 540.0 226.6C542.1 225.7 544.2 222.5 547.0 221.4C549.8 220.3 553.9 221.2 557.0 220.0C560.1 218.8 562.4 217.6 565.7 214.3C569.0 211.0 573.2 205.0 577.0 200.0C580.8 195.0 584.8 190.0 588.6 184.3C592.4 178.6 596.2 171.2 600.0 165.7C603.8 160.2 604.9 161.1 611.4 151.4C617.9 141.7 633.2 116.3 639.0 107.4C644.8 98.5 644.2 99.8 646.0 98.0C647.8 96.2 649.0 97.1 649.6 96.9" fill="none" stroke="#f29010" stroke-width="1.15" stroke-linejoin="round"/><circle cx="649.6" cy="96.9" r="1.9" fill="#f29010"/></svg>
<span class="t" style="top:56.62px;font-size:8.6px;line-height:8.6px;color:#000;right:294.00px;transform-origin:100% 50%;transform:scaleX(0.855);">109.2</span>
<span class="t" style="top:74.88px;font-size:8.6px;line-height:8.6px;color:#000;right:294.00px;transform-origin:100% 50%;transform:scaleX(0.855);">101.4</span>
<span class="t" style="top:93.14px;font-size:8.6px;line-height:8.6px;color:#000;right:294.00px;transform-origin:100% 50%;transform:scaleX(0.855);">93.6</span>
<span class="t" style="top:111.40px;font-size:8.6px;line-height:8.6px;color:#000;right:294.00px;transform-origin:100% 50%;transform:scaleX(0.855);">85.8</span>
<span class="t" style="top:129.66px;font-size:8.6px;line-height:8.6px;color:#000;right:294.00px;transform-origin:100% 50%;transform:scaleX(0.855);">78</span>
<span class="t" style="top:147.92px;font-size:8.6px;line-height:8.6px;color:#000;right:294.00px;transform-origin:100% 50%;transform:scaleX(0.855);">70.2</span>
<span class="t" style="top:166.18px;font-size:8.6px;line-height:8.6px;color:#000;right:294.00px;transform-origin:100% 50%;transform:scaleX(0.855);">62.4</span>
<span class="t" style="top:184.44px;font-size:8.6px;line-height:8.6px;color:#000;right:294.00px;transform-origin:100% 50%;transform:scaleX(0.855);">54.6</span>
<span class="t" style="top:202.70px;font-size:8.6px;line-height:8.6px;color:#000;right:294.00px;transform-origin:100% 50%;transform:scaleX(0.855);">46.8</span>
<span class="t" style="top:220.96px;font-size:8.6px;line-height:8.6px;color:#000;right:294.00px;transform-origin:100% 50%;transform:scaleX(0.855);">39</span>
<span class="t" style="top:239.22px;font-size:8.6px;line-height:8.6px;color:#000;right:294.00px;transform-origin:100% 50%;transform:scaleX(0.855);">31.2</span>
<span class="t" style="top:245.32px;font-size:8.6px;line-height:8.6px;color:#000;left:308.20000000000005px;width:200px;text-align:center;transform-origin:50% 50%;transform:scaleX(0.855);">0</span>
<span class="t" style="top:245.32px;font-size:8.6px;line-height:8.6px;color:#000;left:334.74px;width:200px;text-align:center;transform-origin:50% 50%;transform:scaleX(0.855);">2.7</span>
<span class="t" style="top:245.32px;font-size:8.6px;line-height:8.6px;color:#000;left:360.08000000000004px;width:200px;text-align:center;transform-origin:50% 50%;transform:scaleX(0.855);">5.4</span>
<span class="t" style="top:245.32px;font-size:8.6px;line-height:8.6px;color:#000;left:385.42px;width:200px;text-align:center;transform-origin:50% 50%;transform:scaleX(0.855);">8.1</span>
<span class="t" style="top:245.32px;font-size:8.6px;line-height:8.6px;color:#000;left:410.76000000000005px;width:200px;text-align:center;transform-origin:50% 50%;transform:scaleX(0.855);">10.8</span>
<span class="t" style="top:245.32px;font-size:8.6px;line-height:8.6px;color:#000;left:436.1px;width:200px;text-align:center;transform-origin:50% 50%;transform:scaleX(0.855);">13.5</span>
<span class="t" style="top:245.32px;font-size:8.6px;line-height:8.6px;color:#000;left:461.43999999999994px;width:200px;text-align:center;transform-origin:50% 50%;transform:scaleX(0.855);">16.2</span>
<span class="t" style="top:245.32px;font-size:8.6px;line-height:8.6px;color:#000;left:486.78px;width:200px;text-align:center;transform-origin:50% 50%;transform:scaleX(0.855);">18.9</span>
<span class="t" style="top:245.32px;font-size:8.6px;line-height:8.6px;color:#000;left:512.1199999999999px;width:200px;text-align:center;transform-origin:50% 50%;transform:scaleX(0.855);">21.6</span>
<span class="t" style="top:245.32px;font-size:8.6px;line-height:8.6px;color:#000;left:537.46px;width:200px;text-align:center;transform-origin:50% 50%;transform:scaleX(0.855);">24.3</span>
<span class="t" style="top:245.32px;font-size:8.6px;line-height:8.6px;color:#000;left:562.8px;width:200px;text-align:center;transform-origin:50% 50%;transform:scaleX(0.855);">27</span>
<span class="t" style="top:253.52px;font-size:8.6px;line-height:8.6px;color:#000;left:434.6px;width:200px;text-align:center;transform-origin:50% 50%;transform:scaleX(0.88);">time [s]</span>
<span class="t" style="left:388.9px;top:126.2px;font-size:9px;line-height:8px;letter-spacing:0.2px;transform-origin:0 0;transform:rotate(90deg)">speed [mph]</span>
<div style="left:643.5px;top:38.5px;width:55px;height:13.8px;box-sizing:border-box;background:#ffffe1;border:1px solid #000;border-right:none"></div>
<span class="t" style="top:40.94px;font-size:10px;line-height:10px;color:#000;left:645.8px;transform-origin:0 50%;transform:scaleX(0.908);">Zoom out on</span>
<div style="left:4px;top:288.6px;width:364px;height:19px;background:#ece9d8;"></div>
<div class="btn" style="left:5px;top:290px;width:38.8px;height:16.6px"></div>
<span class="t" style="top:294.20px;font-size:10.4px;line-height:10.4px;color:#000;left:-75.4px;width:200px;text-align:center;transform-origin:50% 50%;transform:scaleX(0.835);">Options</span>
<svg style="left:47.8px;top:291px" width="14" height="15" viewBox="0 0 14 15"><rect x="0.8" y="1.2" width="10.2" height="10" fill="#f4f3ec" stroke="#5e5e5e" stroke-width="1.2"/><circle cx="7.6" cy="8.4" r="3.9" fill="#fff" stroke="#5e5e5e" stroke-width="1"/><path d="M10.4 11.2L13 14.2" stroke="#5e5e5e" stroke-width="1.3"/><path d="M5.8 8.4H9.4M7.6 6.6V10.2" stroke="#e02020" stroke-width="1.2"/></svg>
<svg style="left:66.5px;top:290.5px" width="15" height="15" viewBox="0 0 15 15"><rect x="0.6" y="0.6" width="13.8" height="13.8" fill="#f8f8f4" stroke="#5e5e5e" stroke-width="1.2"/><path d="M3 12L5 7L9.5 3.5L12 4L10.5 8L11.5 12Z" fill="#fff" stroke="#555" stroke-width="1"/><circle cx="5.2" cy="7.3" r="1.5" fill="#20a030"/></svg>
<svg style="left:86.5px;top:291.5px" width="14" height="15" viewBox="0 0 14 15"><circle cx="6.3" cy="6.1" r="5.2" fill="#f8f8f4" stroke="#5e5e5e" stroke-width="1.1"/><path d="M10 10.2L13 13.8" stroke="#5e5e5e" stroke-width="1.4"/><path d="M4.1 6.1H8.5" stroke="#e82030" stroke-width="1.3"/><path d="M6.3 3.9V8.3" stroke="#e82030" stroke-width="1.3"/></svg>
<svg style="left:106.5px;top:291.5px" width="14" height="15" viewBox="0 0 14 15"><circle cx="6.3" cy="6.1" r="5.2" fill="#f8f8f4" stroke="#5e5e5e" stroke-width="1.1"/><path d="M10 10.2L13 13.8" stroke="#5e5e5e" stroke-width="1.4"/><path d="M4.1 6.1H8.5" stroke="#e82030" stroke-width="1.3"/></svg>
<svg style="left:126px;top:291px" width="12" height="14" viewBox="0 0 12 14"><path d="M6.8 3.2A4.6 4.6 0 1 0 10.6 7.6" fill="none" stroke="#5e5e5e" stroke-width="1.5"/><path d="M6 0.6L10.4 3L6.4 5.8Z" fill="#20a030" stroke="#107020" stroke-width="0.4"/></svg>
<svg style="left:146px;top:291px" width="12" height="14" viewBox="0 0 12 14"><path d="M5.2 3.2A4.6 4.6 0 1 1 1.4 7.6" fill="none" stroke="#5e5e5e" stroke-width="1.5"/><path d="M6 0.6L1.6 3L5.6 5.8Z" fill="#20a030" stroke="#107020" stroke-width="0.4"/></svg>
<svg style="left:164.5px;top:292px" width="15" height="12" viewBox="0 0 15 12"><path d="M0.7 6L5.2 3.2V8.8Z" fill="#f0a830" stroke="#6a5a3a" stroke-width="0.7"/><path d="M7.75 8.45V3.55H11.18Q12.45 3.55 12.45 4.82V4.82Q12.45 6.10 11.18 6.10H7.75" fill="none" stroke="#4a4a4a" stroke-width="2.3" stroke-linecap="square" stroke-linejoin="miter"/><path d="M7.75 8.45V3.55H11.18Q12.45 3.55 12.45 4.82V4.82Q12.45 6.10 11.18 6.10H7.75" fill="none" stroke="#fbfaf4" stroke-width="0.55" stroke-linecap="butt" opacity="0.85"/></svg>
<svg style="left:187.5px;top:290px" width="9" height="16" viewBox="0 0 9 16"><path d="M4.5 1.2L7.6 6.3H1.4Z" fill="#28a838" stroke="#3c5c40" stroke-width="0.8"/><path d="M1.6 7.9H7.4" stroke="#8a8a8a" stroke-width="1"/><path d="M2.55 13.25V9.75H5.54Q6.45 9.75 6.45 10.66V10.66Q6.45 11.57 5.54 11.57H2.55" fill="none" stroke="#4a4a4a" stroke-width="2.3" stroke-linecap="square" stroke-linejoin="miter"/><path d="M2.55 13.25V9.75H5.54Q6.45 9.75 6.45 10.66V10.66Q6.45 11.57 5.54 11.57H2.55" fill="none" stroke="#fbfaf4" stroke-width="0.55" stroke-linecap="butt" opacity="0.85"/></svg>
<svg style="left:207px;top:290px" width="9" height="16" viewBox="0 0 9 16"><path d="M2.35 5.65V2.15H5.34Q6.25 2.15 6.25 3.06V3.06Q6.25 3.97 5.34 3.97H2.35" fill="none" stroke="#4a4a4a" stroke-width="2.3" stroke-linecap="square" stroke-linejoin="miter"/><path d="M2.35 5.65V2.15H5.34Q6.25 2.15 6.25 3.06V3.06Q6.25 3.97 5.34 3.97H2.35" fill="none" stroke="#fbfaf4" stroke-width="0.55" stroke-linecap="butt" opacity="0.85"/><path d="M1.4 8.4H7.8L4.6 13.8Z" fill="#fff" stroke="#5e5e5e" stroke-width="1"/></svg>
<svg style="left:224px;top:292px" width="15" height="12" viewBox="0 0 15 12"><path d="M1.55 8.45V3.55H4.98Q6.25 3.55 6.25 4.82V4.82Q6.25 6.10 4.98 6.10H1.55" fill="none" stroke="#4a4a4a" stroke-width="2.3" stroke-linecap="square" stroke-linejoin="miter"/><path d="M1.55 8.45V3.55H4.98Q6.25 3.55 6.25 4.82V4.82Q6.25 6.10 4.98 6.10H1.55" fill="none" stroke="#fbfaf4" stroke-width="0.55" stroke-linecap="butt" opacity="0.85"/><path d="M14.2 6L8.4 3.2V8.8Z" fill="#e82028" stroke="#7a3030" stroke-width="0.7"/></svg>
<svg style="left:244.5px;top:290.5px" width="12" height="15" viewBox="0 0 12 15"><path d="M3.2 8.5V3.2Q3.2 2.2 4.1 2.2Q5 2.2 5 3.2V1.6Q5 0.7 5.9 0.7Q6.8 0.7 6.8 1.6V2.2Q6.8 1.4 7.7 1.4Q8.6 1.4 8.6 2.4V3.6Q8.6 2.8 9.5 2.8Q10.4 2.8 10.4 3.8V9.5Q10.4 13.6 6.8 13.6Q4.6 13.6 3.4 11.6L1 7.6Q0.6 6.6 1.4 6.3Q2.2 6 2.8 7Z M5 3.2V6.6 M6.8 2.2V6.6 M8.6 3.6V6.6" fill="#fff" stroke="#5e5e5e" stroke-width="0.9"/></svg>
<svg style="left:263.5px;top:290.5px" width="14" height="15" viewBox="0 0 14 15"><path d="M4 4.4L10.5 11" stroke="#a09e90" stroke-width="1.8"/><rect x="8.6" y="9.4" width="4.2" height="4.2" fill="#ece9d8" stroke="#a09e90" stroke-width="1.7"/><circle cx="3.2" cy="3.6" r="2.2" fill="#ece9d8" stroke="#a09e90" stroke-width="1.7"/><path d="M7.6 3.8H13.4M10.5 0.9V6.7" stroke="#a09e90" stroke-width="1.8"/></svg>
<svg style="left:283.5px;top:290.5px" width="14" height="15" viewBox="0 0 14 15"><path d="M4 4.4L10.5 11" stroke="#a09e90" stroke-width="1.8"/><rect x="8.6" y="9.4" width="4.2" height="4.2" fill="#ece9d8" stroke="#a09e90" stroke-width="1.7"/><circle cx="3.2" cy="3.6" r="2.2" fill="#ece9d8" stroke="#a09e90" stroke-width="1.7"/><path d="M7.6 3.8H13.4" stroke="#a09e90" stroke-width="1.8"/></svg>
<svg style="left:302.5px;top:290.5px" width="14" height="15" viewBox="0 0 14 15"><path d="M4 4.4L10.5 11" stroke="#a09e90" stroke-width="1.8"/><rect x="8.6" y="9.4" width="4.2" height="4.2" fill="#ece9d8" stroke="#a09e90" stroke-width="1.7"/><path d="M1 1.2H6V5.6H3.2L1 7.4Z" fill="#dddacb" stroke="#a09e90" stroke-width="1.5"/><path d="M7.6 3.8H13.4M10.5 0.9V6.7" stroke="#a09e90" stroke-width="1.8"/></svg>
<div style="left:4px;top:288px;width:364px;height:20px;overflow:hidden"><div style="left:-4px;top:-288px;width:700px;height:640px">
<svg style="left:331.5px;top:292.3px" width="11" height="11" viewBox="0 0 11 11"><rect x="0.5" y="0.5" width="10" height="10" rx="0.8" fill="#f4f4f0" stroke="#3a68a8" stroke-width="1.1"/><path d="M2.5 5.2L4.6 7.6L8.5 3" fill="none" stroke="#21a121" stroke-width="1.7"/></svg>
<span class="t" style="top:293.00px;font-size:10.4px;line-height:10.4px;color:#000;left:345.5px;transform-origin:0 50%;transform:scaleX(0.878);">Interactive Mode</span>
</div></div>
<svg style="left:0;top:270px" width="368" height="367" viewBox="0 270 368 367"><path d="M70.8 307.5V349" stroke="#e6e6e6" stroke-width="1.8"/><path d="M300.6 307.5V323" stroke="#e6e6e6" stroke-width="1.8"/><clipPath id="cpb"><rect x="0" y="392" width="372" height="260"/></clipPath><path d="M71.5 349.0C71.6 354.2 71.8 369.8 72.0 380.0C72.2 390.2 72.5 402.5 72.8 410.0C73.0 417.5 73.2 418.3 73.5 425.0C73.8 431.7 74.2 441.7 74.6 450.0C75.0 458.3 75.4 465.8 76.0 475.0C76.6 484.2 77.2 495.0 78.0 505.0C78.8 515.0 79.7 526.5 80.6 535.0C81.5 543.5 82.3 549.8 83.5 556.0C84.7 562.2 86.0 567.6 87.5 572.0C89.0 576.4 90.8 579.4 92.5 582.5C94.2 585.6 95.9 588.0 98.0 590.5C100.1 593.0 102.7 595.5 105.0 597.5C107.3 599.5 109.5 601.0 112.0 602.5C114.5 604.0 117.0 605.2 120.0 606.5C123.0 607.8 126.7 609.0 130.0 610.0C133.3 611.0 136.7 612.0 140.0 612.8C143.3 613.6 146.7 614.2 150.0 614.8C153.3 615.4 156.3 615.9 160.0 616.4C163.7 616.9 167.8 617.4 172.0 617.9C176.2 618.4 181.2 618.8 185.0 619.2C188.8 619.6 191.7 620.0 195.0 620.3C198.3 620.6 201.8 620.8 205.0 621.0C208.2 621.2 211.3 621.3 214.0 621.3C216.7 621.3 218.8 621.2 221.0 620.8C223.2 620.4 225.6 619.7 227.5 618.8C229.4 617.9 231.0 616.8 232.5 615.5C234.0 614.2 235.2 612.8 236.5 611.0C237.8 609.2 238.9 607.3 240.0 605.0C241.1 602.7 242.2 599.7 243.0 597.0C243.8 594.3 244.5 592.2 245.0 589.0C245.5 585.8 245.7 581.8 246.0 578.0C246.3 574.2 246.5 569.8 246.8 566.0C247.1 562.2 247.3 558.5 247.8 555.0C248.3 551.5 249.0 548.0 249.8 545.0C250.6 542.0 251.5 540.0 252.8 537.0C254.1 534.0 255.9 530.2 257.5 527.0C259.1 523.8 260.6 520.8 262.5 517.5C264.4 514.2 266.9 510.3 269.0 507.0C271.1 503.7 273.0 500.8 275.0 497.5C277.0 494.2 279.2 490.7 281.0 487.5C282.8 484.3 284.4 481.8 286.0 478.5C287.6 475.2 289.2 471.2 290.5 467.5C291.8 463.8 293.0 459.9 294.0 456.0C295.0 452.1 295.8 448.3 296.5 444.0C297.2 439.7 297.8 435.0 298.3 430.0C298.8 425.0 299.3 419.8 299.6 414.0C299.9 408.2 300.1 402.3 300.3 395.0C300.5 387.7 300.6 378.3 300.6 370.0C300.7 361.7 300.6 352.8 300.6 345.0C300.6 337.2 300.4 326.7 300.4 323.0" fill="none" stroke="#555" stroke-width="1.4" transform="translate(0.6 0)" clip-path="url(#cpb)"/><path d="M71.5 349.0C71.6 354.2 71.8 369.8 72.0 380.0C72.2 390.2 72.5 402.5 72.8 410.0C73.0 417.5 73.2 418.3 73.5 425.0C73.8 431.7 74.2 441.7 74.6 450.0C75.0 458.3 75.4 465.8 76.0 475.0C76.6 484.2 77.2 495.0 78.0 505.0C78.8 515.0 79.7 526.5 80.6 535.0C81.5 543.5 82.3 549.8 83.5 556.0C84.7 562.2 86.0 567.6 87.5 572.0C89.0 576.4 90.8 579.4 92.5 582.5C94.2 585.6 95.9 588.0 98.0 590.5C100.1 593.0 102.7 595.5 105.0 597.5C107.3 599.5 109.5 601.0 112.0 602.5C114.5 604.0 117.0 605.2 120.0 606.5C123.0 607.8 126.7 609.0 130.0 610.0C133.3 611.0 136.7 612.0 140.0 612.8C143.3 613.6 146.7 614.2 150.0 614.8C153.3 615.4 156.3 615.9 160.0 616.4C163.7 616.9 167.8 617.4 172.0 617.9C176.2 618.4 181.2 618.8 185.0 619.2C188.8 619.6 191.7 620.0 195.0 620.3C198.3 620.6 201.8 620.8 205.0 621.0C208.2 621.2 211.3 621.3 214.0 621.3C216.7 621.3 218.8 621.2 221.0 620.8C223.2 620.4 225.6 619.7 227.5 618.8C229.4 617.9 231.0 616.8 232.5 615.5C234.0 614.2 235.2 612.8 236.5 611.0C237.8 609.2 238.9 607.3 240.0 605.0C241.1 602.7 242.2 599.7 243.0 597.0C243.8 594.3 244.5 592.2 245.0 589.0C245.5 585.8 245.7 581.8 246.0 578.0C246.3 574.2 246.5 569.8 246.8 566.0C247.1 562.2 247.3 558.5 247.8 555.0C248.3 551.5 249.0 548.0 249.8 545.0C250.6 542.0 251.5 540.0 252.8 537.0C254.1 534.0 255.9 530.2 257.5 527.0C259.1 523.8 260.6 520.8 262.5 517.5C264.4 514.2 266.9 510.3 269.0 507.0C271.1 503.7 273.0 500.8 275.0 497.5C277.0 494.2 279.2 490.7 281.0 487.5C282.8 484.3 284.4 481.8 286.0 478.5C287.6 475.2 289.2 471.2 290.5 467.5C291.8 463.8 293.0 459.9 294.0 456.0C295.0 452.1 295.8 448.3 296.5 444.0C297.2 439.7 297.8 435.0 298.3 430.0C298.8 425.0 299.3 419.8 299.6 414.0C299.9 408.2 300.1 402.3 300.3 395.0C300.5 387.7 300.6 378.3 300.6 370.0C300.7 361.7 300.6 352.8 300.6 345.0C300.6 337.2 300.4 326.7 300.4 323.0" fill="none" stroke="#f0503c" stroke-width="1.5" transform="translate(-0.6 0)"/><path d="M71.5 349.0C71.6 354.2 71.8 369.8 72.0 380.0C72.2 390.2 72.5 402.5 72.8 410.0C73.0 417.5 73.2 418.3 73.5 425.0C73.8 431.7 74.2 441.7 74.6 450.0C75.0 458.3 75.4 465.8 76.0 475.0C76.6 484.2 77.2 495.0 78.0 505.0C78.8 515.0 79.7 526.5 80.6 535.0C81.5 543.5 82.3 549.8 83.5 556.0C84.7 562.2 86.0 567.6 87.5 572.0C89.0 576.4 90.8 579.4 92.5 582.5C94.2 585.6 95.9 588.0 98.0 590.5C100.1 593.0 102.7 595.5 105.0 597.5C107.3 599.5 109.5 601.0 112.0 602.5C114.5 604.0 117.0 605.2 120.0 606.5C123.0 607.8 126.7 609.0 130.0 610.0C133.3 611.0 136.7 612.0 140.0 612.8C143.3 613.6 146.7 614.2 150.0 614.8C153.3 615.4 156.3 615.9 160.0 616.4C163.7 616.9 167.8 617.4 172.0 617.9C176.2 618.4 181.2 618.8 185.0 619.2C188.8 619.6 191.7 620.0 195.0 620.3C198.3 620.6 201.8 620.8 205.0 621.0C208.2 621.2 211.3 621.3 214.0 621.3C216.7 621.3 218.8 621.2 221.0 620.8C223.2 620.4 225.6 619.7 227.5 618.8C229.4 617.9 231.0 616.8 232.5 615.5C234.0 614.2 235.2 612.8 236.5 611.0C237.8 609.2 238.9 607.3 240.0 605.0C241.1 602.7 242.2 599.7 243.0 597.0C243.8 594.3 244.5 592.2 245.0 589.0C245.5 585.8 245.7 581.8 246.0 578.0C246.3 574.2 246.5 569.8 246.8 566.0C247.1 562.2 247.3 558.5 247.8 555.0C248.3 551.5 249.0 548.0 249.8 545.0C250.6 542.0 251.5 540.0 252.8 537.0C254.1 534.0 255.9 530.2 257.5 527.0C259.1 523.8 260.6 520.8 262.5 517.5C264.4 514.2 266.9 510.3 269.0 507.0C271.1 503.7 273.0 500.8 275.0 497.5C277.0 494.2 279.2 490.7 281.0 487.5C282.8 484.3 284.4 481.8 286.0 478.5C287.6 475.2 289.2 471.2 290.5 467.5C291.8 463.8 293.0 459.9 294.0 456.0C295.0 452.1 295.8 448.3 296.5 444.0C297.2 439.7 297.8 435.0 298.3 430.0C298.8 425.0 299.3 419.8 299.6 414.0C299.9 408.2 300.1 402.3 300.3 395.0C300.5 387.7 300.6 378.3 300.6 370.0C300.7 361.7 300.6 352.8 300.6 345.0C300.6 337.2 300.4 326.7 300.4 323.0" fill="none" stroke="#f49010" stroke-width="1.9"/><path d="M71 349V392" stroke="#f0502e" stroke-width="1.8"/><path d="M300 323V392" stroke="#f0502e" stroke-width="1.8"/><path d="M72.7 351V395" stroke="#f49010" stroke-width="1.6"/><path d="M301.6 326V395" stroke="#f49010" stroke-width="1.6"/><path d="M35.8 316V320H129.2V316" fill="none" stroke="#444" stroke-width="1.1"/><path d="M4 348.8L165 346.2V353" fill="none" stroke="#0a10f0" stroke-width="1.6"/><path d="M159 352H171L165 363.5Z" fill="#0a10f0"/><path d="M208 326V331.6L368 324" fill="none" stroke="#0a10f0" stroke-width="1.6"/><path d="M202 326.5H214L208 315.5Z" fill="#0a10f0"/><circle cx="332.7" cy="380.3" r="3.6" fill="#0a10f0"/><path d="M333 380.3H368" stroke="#0a10f0" stroke-width="1.5"/></svg>
<span class="t" style="top:309.02px;font-size:8.6px;line-height:8.6px;color:#000;left:-18.5px;width:200px;text-align:center;transform-origin:50% 50%;transform:scaleX(0.88);">scale: 100m</span>
<span class="t" style="top:342.62px;font-size:8.6px;line-height:8.6px;color:#111;left:11px;transform-origin:0 50%;transform:scaleX(0.88);">R: PILOT_SX  L: 2  S: Sector 2</span>
<span class="t" style="top:351.27px;font-size:8.6px;line-height:8.6px;color:#ee3344;left:11px;transform-origin:0 50%;transform:scaleX(0.88);">R: PILOT_SX  L: 3  S: Sector 2</span>
<span class="t" style="top:359.92px;font-size:8.6px;line-height:8.6px;color:#f28c10;left:11px;transform-origin:0 50%;transform:scaleX(0.88);">R: PILOT_SX  L: 4  S: Sector 2</span>
<span class="t" style="top:373.92px;font-size:8.6px;line-height:8.6px;color:#000;left:320.3px;transform-origin:0 50%;transform:scaleX(0.88);">M3</span>
<span class="t" style="top:613.92px;font-size:8.6px;line-height:8.6px;color:#000;left:158px;transform-origin:0 50%;transform:scaleX(0.88);">Sector 2</span>
<div style="left:375px;top:288.6px;width:165px;height:18px;background:#ece9d8;"></div>
<div class="btn" style="left:376.3px;top:289.6px;width:52.2px;height:16px"></div>
<span class="t" style="top:293.40px;font-size:10.4px;line-height:10.4px;color:#000;left:302.6px;width:200px;text-align:center;transform-origin:50% 50%;transform:scaleX(0.835);">Options</span>
<svg style="left:430.3px;top:292.2px" width="11" height="11" viewBox="0 0 11 11"><rect x="0.5" y="0.5" width="10" height="10" rx="0.8" fill="#f4f4f0" stroke="#3a68a8" stroke-width="1.1"/><path d="M2.5 5.2L4.6 7.6L8.5 3" fill="none" stroke="#21a121" stroke-width="1.7"/></svg>
<span class="t" style="top:293.90px;font-size:10.4px;line-height:10.4px;color:#000;left:444px;transform-origin:0 50%;transform:scaleX(0.89);">Interactive Mode</span>
<span class="t" style="top:288.72px;font-size:8.6px;line-height:8.6px;color:#111;font-weight:bold;left:567px;transform-origin:0 50%;transform:scaleX(1.055);">R: PILOT_SX  L: 2  S: Sector 2</span>
<span class="t" style="top:297.22px;font-size:8.6px;line-height:8.6px;color:#ee3344;font-weight:bold;left:567px;transform-origin:0 50%;transform:scaleX(1.055);">R: PILOT_SX  L: 3  S: Sector 2</span>
<span class="t" style="top:305.72px;font-size:8.6px;line-height:8.6px;color:#f28c10;font-weight:bold;left:567px;transform-origin:0 50%;transform:scaleX(1.055);">R: PILOT_SX  L: 4  S: Sector 2</span>
<svg style="left:372px;top:340px" width="328" height="260" viewBox="372 340 328 260"><path d="M420.5 358.8H680.5" stroke="#8c8c8c" stroke-width="1"/><path d="M420.5 382.0H680.5" stroke="#8c8c8c" stroke-width="1"/><path d="M420.5 405.2H680.5" stroke="#8c8c8c" stroke-width="1"/><path d="M420.5 428.4H680.5" stroke="#8c8c8c" stroke-width="1"/><path d="M420.5 451.6H680.5" stroke="#8c8c8c" stroke-width="1"/><path d="M420.5 474.8H680.5" stroke="#8c8c8c" stroke-width="1"/><path d="M420.5 498.0H680.5" stroke="#8c8c8c" stroke-width="1"/><path d="M420.5 521.2H680.5" stroke="#8c8c8c" stroke-width="1"/><path d="M420.5 544.4H680.5" stroke="#8c8c8c" stroke-width="1"/><path d="M420.5 358.3V568" stroke="#000" stroke-width="2.2"/><path d="M419.5 567H682" stroke="#000" stroke-width="2"/><path d="M420.5 567V572.5" stroke="#000" stroke-width="1.5"/><path d="M437.9 567V572.5" stroke="#000" stroke-width="1.5"/><path d="M455.2 567V572.5" stroke="#000" stroke-width="1.5"/><path d="M472.6 567V572.5" stroke="#000" stroke-width="1.5"/><path d="M490.0 567V572.5" stroke="#000" stroke-width="1.5"/><path d="M507.3 567V572.5" stroke="#000" stroke-width="1.5"/><path d="M524.7 567V572.5" stroke="#000" stroke-width="1.5"/><path d="M542.1 567V572.5" stroke="#000" stroke-width="1.5"/><path d="M559.4 567V572.5" stroke="#000" stroke-width="1.5"/><path d="M576.8 567V572.5" stroke="#000" stroke-width="1.5"/><path d="M594.2 567V572.5" stroke="#000" stroke-width="1.5"/><path d="M611.5 567V572.5" stroke="#000" stroke-width="1.5"/><path d="M628.9 567V572.5" stroke="#000" stroke-width="1.5"/><path d="M646.3 567V572.5" stroke="#000" stroke-width="1.5"/><path d="M663.6 567V572.5" stroke="#000" stroke-width="1.5"/><path d="M681.0 567V572.5" stroke="#000" stroke-width="1.5"/><path d="M417.3 358.8H420.5" stroke="#000" stroke-width="1.3"/><path d="M417.3 382.0H420.5" stroke="#000" stroke-width="1.3"/><path d="M417.3 405.2H420.5" stroke="#000" stroke-width="1.3"/><path d="M417.3 428.4H420.5" stroke="#000" stroke-width="1.3"/><path d="M417.3 451.6H420.5" stroke="#000" stroke-width="1.3"/><path d="M417.3 474.8H420.5" stroke="#000" stroke-width="1.3"/><path d="M417.3 498.0H420.5" stroke="#000" stroke-width="1.3"/><path d="M417.3 521.2H420.5" stroke="#000" stroke-width="1.3"/><path d="M417.3 544.4H420.5" stroke="#000" stroke-width="1.3"/><path d="M417.3 567.6H420.5" stroke="#000" stroke-width="1.3"/><path d="M423.5 567H426.5" stroke="#ee3a44" stroke-width="2"/><path d="M425.5 567H433.5" stroke="#f49010" stroke-width="2"/><path d="M440.9 567H443.9" stroke="#ee3a44" stroke-width="2"/><path d="M442.9 567H450.9" stroke="#f49010" stroke-width="2"/><path d="M458.2 567H461.2" stroke="#ee3a44" stroke-width="2"/><path d="M460.2 567H468.2" stroke="#f49010" stroke-width="2"/><path d="M475.6 567H478.6" stroke="#ee3a44" stroke-width="2"/><path d="M477.6 567H485.6" stroke="#f49010" stroke-width="2"/><path d="M493.0 567H496.0" stroke="#ee3a44" stroke-width="2"/><path d="M495.0 567H503.0" stroke="#f49010" stroke-width="2"/><path d="M510.3 567H513.3" stroke="#ee3a44" stroke-width="2"/><path d="M512.3 567H520.3" stroke="#f49010" stroke-width="2"/><path d="M527.7 567H530.7" stroke="#ee3a44" stroke-width="2"/><path d="M529.7 567H537.7" stroke="#f49010" stroke-width="2"/><path d="M545.1 567H548.1" stroke="#ee3a44" stroke-width="2"/><path d="M547.1 567H555.1" stroke="#f49010" stroke-width="2"/><path d="M562.4 567H565.4" stroke="#ee3a44" stroke-width="2"/><path d="M564.4 567H572.4" stroke="#f49010" stroke-width="2"/><path d="M579.8 567H582.8" stroke="#ee3a44" stroke-width="2"/><path d="M581.8 567H589.8" stroke="#f49010" stroke-width="2"/><path d="M597.2 567H600.2" stroke="#ee3a44" stroke-width="2"/><path d="M599.2 567H607.2" stroke="#f49010" stroke-width="2"/><path d="M614.5 567H617.5" stroke="#ee3a44" stroke-width="2"/><path d="M616.5 567H624.5" stroke="#f49010" stroke-width="2"/><path d="M631.9 567H634.9" stroke="#ee3a44" stroke-width="2"/><path d="M633.9 567H641.9" stroke="#f49010" stroke-width="2"/><path d="M649.3 567H652.3" stroke="#ee3a44" stroke-width="2"/><path d="M651.3 567H659.3" stroke="#f49010" stroke-width="2"/><path d="M666.6 567H669.6" stroke="#ee3a44" stroke-width="2"/><path d="M668.6 567H676.6" stroke="#f49010" stroke-width="2"/><rect x="422.6" y="366.6" width="6.8" height="200.4" fill="#fff" stroke="#222" stroke-width="1.2"/><rect x="440.1" y="514.1" width="6.8" height="52.9" fill="#fff" stroke="#222" stroke-width="1.2"/><rect x="528.1" y="552.1" width="6.8" height="14.9" fill="#fff" stroke="#ee3a44" stroke-width="1.2"/><rect x="546.1" y="359.1" width="6.8" height="207.9" fill="#fff" stroke="#ee3a44" stroke-width="1.2"/><rect x="563.1" y="538.1" width="6.8" height="28.9" fill="#fff" stroke="#ee3a44" stroke-width="1.2"/><rect x="652.1" y="519.1" width="6.8" height="47.9" fill="#fff" stroke="#f49010" stroke-width="1.2"/><rect x="669.1" y="361.6" width="6.8" height="205.4" fill="#fff" stroke="#f49010" stroke-width="1.2"/></svg>
<span class="t" style="top:354.42px;font-size:8.6px;line-height:8.6px;color:#000;right:283.70px;transform-origin:100% 50%;transform:scaleX(0.855);">82.2</span>
<span class="t" style="top:377.62px;font-size:8.6px;line-height:8.6px;color:#000;right:283.70px;transform-origin:100% 50%;transform:scaleX(0.855);">73.1</span>
<span class="t" style="top:400.82px;font-size:8.6px;line-height:8.6px;color:#000;right:283.70px;transform-origin:100% 50%;transform:scaleX(0.855);">63.9</span>
<span class="t" style="top:424.02px;font-size:8.6px;line-height:8.6px;color:#000;right:283.70px;transform-origin:100% 50%;transform:scaleX(0.855);">54.8</span>
<span class="t" style="top:447.22px;font-size:8.6px;line-height:8.6px;color:#000;right:283.70px;transform-origin:100% 50%;transform:scaleX(0.855);">45.7</span>
<span class="t" style="top:470.42px;font-size:8.6px;line-height:8.6px;color:#000;right:283.70px;transform-origin:100% 50%;transform:scaleX(0.855);">36.5</span>
<span class="t" style="top:493.62px;font-size:8.6px;line-height:8.6px;color:#000;right:283.70px;transform-origin:100% 50%;transform:scaleX(0.855);">27.4</span>
<span class="t" style="top:516.82px;font-size:8.6px;line-height:8.6px;color:#000;right:283.70px;transform-origin:100% 50%;transform:scaleX(0.855);">18.3</span>
<span class="t" style="top:540.02px;font-size:8.6px;line-height:8.6px;color:#000;right:283.70px;transform-origin:100% 50%;transform:scaleX(0.855);">9.13</span>
<span class="t" style="top:563.22px;font-size:8.6px;line-height:8.6px;color:#000;right:283.70px;transform-origin:100% 50%;transform:scaleX(0.855);">0</span>
<span class="t" style="top:577.72px;font-size:8.6px;line-height:8.6px;color:#000;left:320.8px;width:200px;text-align:center;transform-origin:50% 50%;transform:scaleX(0.855);">111</span>
<span class="t" style="top:577.72px;font-size:8.6px;line-height:8.6px;color:#000;left:338.1666666666667px;width:200px;text-align:center;transform-origin:50% 50%;transform:scaleX(0.855);">132</span>
<span class="t" style="top:577.72px;font-size:8.6px;line-height:8.6px;color:#000;left:355.53333333333336px;width:200px;text-align:center;transform-origin:50% 50%;transform:scaleX(0.855);">153</span>
<span class="t" style="top:577.72px;font-size:8.6px;line-height:8.6px;color:#000;left:372.90000000000003px;width:200px;text-align:center;transform-origin:50% 50%;transform:scaleX(0.855);">174</span>
<span class="t" style="top:577.72px;font-size:8.6px;line-height:8.6px;color:#000;left:390.2666666666667px;width:200px;text-align:center;transform-origin:50% 50%;transform:scaleX(0.855);">195</span>
<span class="t" style="top:577.72px;font-size:8.6px;line-height:8.6px;color:#000;left:407.6333333333334px;width:200px;text-align:center;transform-origin:50% 50%;transform:scaleX(0.855);">215</span>
<span class="t" style="top:577.72px;font-size:8.6px;line-height:8.6px;color:#000;left:425.0px;width:200px;text-align:center;transform-origin:50% 50%;transform:scaleX(0.855);">236</span>
<span class="t" style="top:577.72px;font-size:8.6px;line-height:8.6px;color:#000;left:442.36666666666656px;width:200px;text-align:center;transform-origin:50% 50%;transform:scaleX(0.855);">257</span>
<span class="t" style="top:577.72px;font-size:8.6px;line-height:8.6px;color:#000;left:459.73333333333335px;width:200px;text-align:center;transform-origin:50% 50%;transform:scaleX(0.855);">278</span>
<span class="t" style="top:577.72px;font-size:8.6px;line-height:8.6px;color:#000;left:477.0999999999999px;width:200px;text-align:center;transform-origin:50% 50%;transform:scaleX(0.855);">298</span>
<span class="t" style="top:577.72px;font-size:8.6px;line-height:8.6px;color:#000;left:494.4666666666667px;width:200px;text-align:center;transform-origin:50% 50%;transform:scaleX(0.855);">319</span>
<span class="t" style="top:577.72px;font-size:8.6px;line-height:8.6px;color:#000;left:511.83333333333326px;width:200px;text-align:center;transform-origin:50% 50%;transform:scaleX(0.855);">340</span>
<span class="t" style="top:577.72px;font-size:8.6px;line-height:8.6px;color:#000;left:529.1999999999999px;width:200px;text-align:center;transform-origin:50% 50%;transform:scaleX(0.855);">361</span>
<span class="t" style="top:577.72px;font-size:8.6px;line-height:8.6px;color:#000;left:546.5666666666666px;width:200px;text-align:center;transform-origin:50% 50%;transform:scaleX(0.855);">381</span>
<span class="t" style="top:577.72px;font-size:8.6px;line-height:8.6px;color:#000;left:563.9333333333333px;width:200px;text-align:center;transform-origin:50% 50%;transform:scaleX(0.855);">402</span>
<span class="t" style="top:577.72px;font-size:8.6px;line-height:8.6px;color:#000;left:581.3px;width:200px;text-align:center;transform-origin:50% 50%;transform:scaleX(0.855);">423</span>
<span class="t" style="top:585.02px;font-size:8.6px;line-height:8.6px;color:#000;left:436.29999999999995px;width:200px;text-align:center;transform-origin:50% 50%;transform:scaleX(0.88);">time [s]</span>
<span class="t" style="top:431.52px;font-size:8.6px;line-height:8.6px;color:#000;left:283.6px;width:200px;text-align:center;transform-origin:50% 50%;transform:scaleX(0.88);">F</span>
<span class="t" style="top:438.47px;font-size:8.6px;line-height:8.6px;color:#000;left:283.6px;width:200px;text-align:center;transform-origin:50% 50%;transform:scaleX(0.88);">r</span>
<span class="t" style="top:445.42px;font-size:8.6px;line-height:8.6px;color:#000;left:283.6px;width:200px;text-align:center;transform-origin:50% 50%;transform:scaleX(0.88);">e</span>
<span class="t" style="top:452.37px;font-size:8.6px;line-height:8.6px;color:#000;left:283.6px;width:200px;text-align:center;transform-origin:50% 50%;transform:scaleX(0.88);">q</span>
<span class="t" style="top:459.32px;font-size:8.6px;line-height:8.6px;color:#000;left:283.6px;width:200px;text-align:center;transform-origin:50% 50%;transform:scaleX(0.88);">u</span>
<span class="t" style="top:466.27px;font-size:8.6px;line-height:8.6px;color:#000;left:283.6px;width:200px;text-align:center;transform-origin:50% 50%;transform:scaleX(0.88);">e</span>
<span class="t" style="top:473.22px;font-size:8.6px;line-height:8.6px;color:#000;left:283.6px;width:200px;text-align:center;transform-origin:50% 50%;transform:scaleX(0.88);">n</span>
<span class="t" style="top:480.17px;font-size:8.6px;line-height:8.6px;color:#000;left:283.6px;width:200px;text-align:center;transform-origin:50% 50%;transform:scaleX(0.88);">c</span>
<span class="t" style="top:487.12px;font-size:8.6px;line-height:8.6px;color:#000;left:283.6px;width:200px;text-align:center;transform-origin:50% 50%;transform:scaleX(0.88);">y</span>
<span class="t" style="top:500.22px;font-size:8.6px;line-height:8.6px;color:#000;left:283.6px;width:200px;text-align:center;transform-origin:50% 50%;transform:scaleX(0.88);">%</span>
</body></html>
